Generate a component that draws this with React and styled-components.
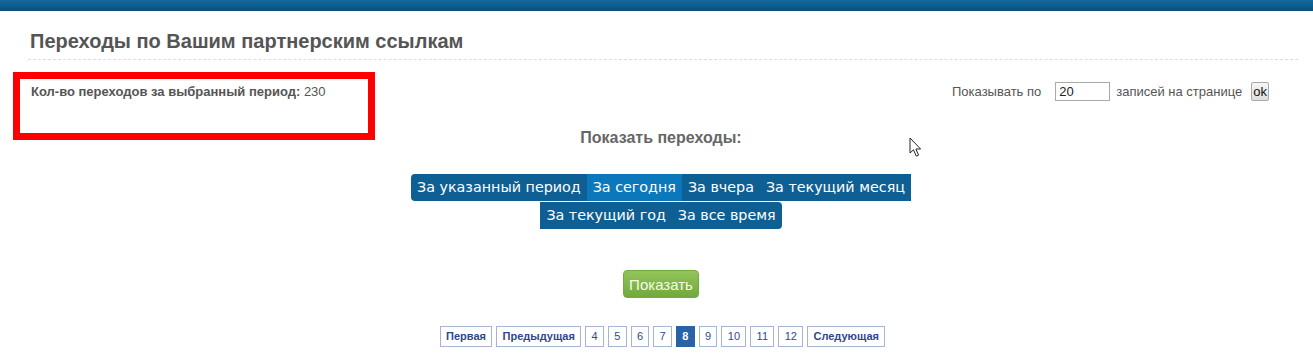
import React, { useState } from "react";
import styled, { createGlobalStyle } from "styled-components";

const GlobalStyle = createGlobalStyle`
  html, body {
    margin: 0;
    padding: 0;
    background: #fff;
    font-family: "Liberation Sans", Arial, sans-serif;
  }
`;

const PERIODS = [
  "За указанный период",
  "За сегодня",
  "За вчера",
  "За текущий месяц",
  "За текущий год",
  "За все время",
];

const PAGES = ["4", "5", "6", "7", "8", "9", "10", "11", "12"];

export default function App() {
  const [period, setPeriod] = useState(1);
  const [perPage, setPerPage] = useState("20");

  return (
    <>
      <GlobalStyle />
      <TopBar />
      <Page>
        <Title>Переходы по Вашим партнерским ссылкам</Title>
        <InfoRow>
          <Counter>
            <b>Кол-во переходов за выбранный период:</b> 230
          </Counter>
          <PerPage>
            <span>Показывать по</span>
            <PerPageInput
              value={perPage}
              onChange={(e) => setPerPage(e.target.value)}
            />
            <span>записей на странице</span>
            <OkButton>ok</OkButton>
          </PerPage>
          <Highlight />
        </InfoRow>
        <Center>
          <SectionTitle>Показать переходы:</SectionTitle>
          <Tabs>
            {PERIODS.map((label, i) => (
              <Tab
                key={label}
                $active={i === period}
                $first={i === 0}
                $last={i === PERIODS.length - 1}
                onClick={() => setPeriod(i)}
              >
                {label}
              </Tab>
            ))}
          </Tabs>
          <ShowButton>Показать</ShowButton>
          <Pager>
            <PageLink $bold>Первая</PageLink>
            <PageLink $bold>Предыдущая</PageLink>
            {PAGES.map((p) => (
              <PageLink key={p} $active={p === "8"}>
                {p}
              </PageLink>
            ))}
            <PageLink $bold>Следующая</PageLink>
          </Pager>
          <Cursor viewBox="0 0 14 21">
            <path
              d="M1 1 L1 16 L4.5 12.8 L7.3 19.2 L9.6 18.2 L6.9 12 L11.6 12 Z"
              fill="#fff"
              stroke="#222"
              strokeWidth="1"
              strokeLinejoin="round"
            />
          </Cursor>
        </Center>
      </Page>
    </>
  );
}

const TopBar = styled.div`
  height: 11px;
  background: linear-gradient(#156a9e, #07507f);
`;

const Page = styled.div`
  padding: 0 15px 0 13px;
`;

const Title = styled.h1`
  margin: 0 0 0 15px;
  padding: 19px 0 6px 2px;
  font-size: 20px;
  line-height: 23px;
  font-weight: bold;
  color: #555;
  border-bottom: 1px dashed #ddd;
`;

const InfoRow = styled.div`
  position: relative;
  display: flex;
  justify-content: space-between;
  align-items: center;
  padding: 21px 29px 0 18px;
`;

const Counter = styled.div`
  font-size: 13px;
  line-height: 15px;
  color: #555;
`;

const PerPage = styled.div`
  display: flex;
  align-items: center;
  height: 20px;
  font-size: 13px;
  color: #555;
`;

const PerPageInput = styled.input`
  box-sizing: border-box;
  width: 55px;
  height: 19px;
  margin: 0 6px 0 14px;
  padding: 0 3px;
  border: 1px solid #a9a9a9;
  font-family: "Liberation Sans", Arial, sans-serif;
  font-size: 13px;
  color: #222;
`;

const OkButton = styled.button`
  box-sizing: border-box;
  height: 19px;
  margin-left: 9px;
  padding: 0 1px;
  border: 1px solid #aaa;
  border-radius: 2px;
  background: linear-gradient(#f6f6f6, #dedede);
  font-family: "Liberation Sans", Arial, sans-serif;
  font-size: 13px;
  color: #111;
`;

const Highlight = styled.div`
  position: absolute;
  left: 0;
  top: 12px;
  box-sizing: border-box;
  width: 362px;
  height: 68px;
  border: 7px solid #ff0000;
  pointer-events: none;
`;

const Center = styled.div`
  position: relative;
  display: flex;
  flex-direction: column;
  align-items: center;
  padding-left: 11px;
`;

const SectionTitle = styled.div`
  margin-top: 28px;
  font-size: 16px;
  line-height: 18px;
  font-weight: bold;
  color: #666;
`;

const Tabs = styled.div`
  display: flex;
  flex-wrap: wrap;
  justify-content: center;
  row-gap: 1px;
  width: 540px;
  margin-top: 27px;
`;

const Tab = styled.div`
  height: 27px;
  padding: 0 6px;
  font-family: "DejaVu Sans", Verdana, sans-serif;
  font-size: 14.3px;
  line-height: 27px;
  color: #fff;
  white-space: nowrap;
  cursor: pointer;
  background: ${(p) => (p.$active ? "#0b78bb" : "#0e5f94")};
  border-radius: ${(p) =>
    p.$first ? "4px 0 0 4px" : p.$last ? "0 4px 4px 0" : "0"};
`;

const ShowButton = styled.button`
  margin-top: 41px;
  height: 28px;
  padding: 0 5px;
  border: 1px solid #74ad3f;
  border-radius: 4px;
  background: linear-gradient(#92c45a, #71a93c);
  font-family: "Liberation Sans", Arial, sans-serif;
  font-size: 15px;
  color: #f4fbe8;
  cursor: pointer;
`;

const Pager = styled.div`
  display: flex;
  gap: 4px;
  margin-top: 28px;
  padding-left: 3px;
`;

const PageLink = styled.a`
  box-sizing: border-box;
  height: 21px;
  padding: 0 5.3px;
  border: 1px solid ${(p) => (p.$active ? "#2a62a8" : "#a7b5d5")};
  background: ${(p) => (p.$active ? "#2a62a8" : "#fff")};
  font-size: 11px;
  line-height: 19px;
  text-align: center;
  color: ${(p) => (p.$active ? "#fff" : "#2c4a8a")};
  font-weight: ${(p) => (p.$active || p.$bold ? "bold" : "normal")};
  cursor: pointer;
`;

const Cursor = styled.svg`
  position: absolute;
  left: 896px;
  top: 36px;
  width: 14px;
  height: 21px;
`;
